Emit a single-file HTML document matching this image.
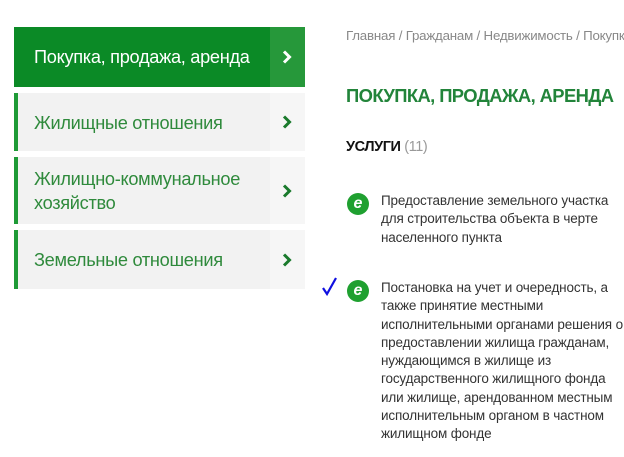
<!DOCTYPE html>
<html><head><meta charset="utf-8"><style>
body{margin:0;width:624px;height:457px;background:#fff;position:relative;overflow:hidden;font-family:"Liberation Sans",sans-serif}
.it{position:absolute;left:14px;width:291px;background:#f2f2f2;border-left:4px solid #1e9a36;box-sizing:border-box}
.it .t{position:absolute;left:16px;color:#2f8a3c;font-size:18.2px;line-height:24px;letter-spacing:-0.3px}
.it .a{position:absolute;right:0;top:0;bottom:0;width:35px;background:#f6f6f6}
.a svg{position:absolute;left:11px;top:50%;margin-top:-7px}
.act{background:#0b8a26;border-left:none}
.act .a{background:#26983a}
.act .t{color:#fff;left:20px}
.ab{position:absolute;white-space:nowrap}
.e{position:absolute;width:22px;height:22px;border-radius:50%;background:#1fa030;color:#fff;font-weight:bold;font-style:italic;font-size:16px;line-height:21px;text-align:center}
.txt{position:absolute;left:381px;font-size:13.5px;line-height:18.3px;color:#333;white-space:nowrap;letter-spacing:-0.15px}
</style></head><body>
<div class="it act" style="top:27px;height:60px"><div class="t" style="top:18px">Покупка, продажа, аренда</div><div class="a"><svg width="12" height="14" viewBox="0 0 12 14"><path d="M3 1.5 L8.5 7 L3 12.5" stroke="#fff" stroke-width="3" fill="none"/></svg></div></div>
<div class="it" style="top:93px;height:58px"><div class="t" style="top:18px">Жилищные отношения</div><div class="a"><svg width="12" height="14" viewBox="0 0 12 14"><path d="M3 1.5 L8.5 7 L3 12.5" stroke="#1a7a2c" stroke-width="3" fill="none"/></svg></div></div>
<div class="it" style="top:157px;height:67px"><div class="t" style="top:10px">Жилищно-коммунальное<br>хозяйство</div><div class="a"><svg width="12" height="14" viewBox="0 0 12 14"><path d="M3 1.5 L8.5 7 L3 12.5" stroke="#1a7a2c" stroke-width="3" fill="none"/></svg></div></div>
<div class="it" style="top:230px;height:59px"><div class="t" style="top:18px">Земельные отношения</div><div class="a"><svg width="12" height="14" viewBox="0 0 12 14"><path d="M3 1.5 L8.5 7 L3 12.5" stroke="#1a7a2c" stroke-width="3" fill="none"/></svg></div></div>

<div class="ab" style="left:346px;top:28px;font-size:13.3px;color:#888;letter-spacing:-0.2px">Главная / Гражданам / Недвижимость / Покупка</div>
<div class="ab" style="left:346px;top:85px;font-size:18.4px;font-weight:bold;color:#22843a;letter-spacing:-0.6px">ПОКУПКА, ПРОДАЖА, АРЕНДА</div>
<div class="ab" style="left:346px;top:139px;font-size:14.5px;color:#111;letter-spacing:-0.4px"><b>УСЛУГИ</b> <span style="color:#999;font-weight:normal">(11)</span></div>

<div class="e" style="left:347px;top:193px">e</div>
<div class="txt" style="top:192px">Предоставление земельного участка<br>для строительства объекта в черте<br>населенного пункта</div>

<svg style="position:absolute;left:321px;top:276px" width="18" height="20" viewBox="0 0 18 20"><path d="M2 12 L6 18 L15 2" stroke="#1010e0" stroke-width="2.2" fill="none"/></svg>
<div class="e" style="left:347px;top:280px">e</div>
<div class="txt" style="top:279px">Постановка на учет и очередность, а<br>также принятие местными<br>исполнительными органами решения о<br>предоставлении жилища гражданам,<br>нуждающимся в жилище из<br>государственного жилищного фонда<br>или жилище, арендованном местным<br>исполнительным органом в частном<br>жилищном фонде</div>
</body></html>
